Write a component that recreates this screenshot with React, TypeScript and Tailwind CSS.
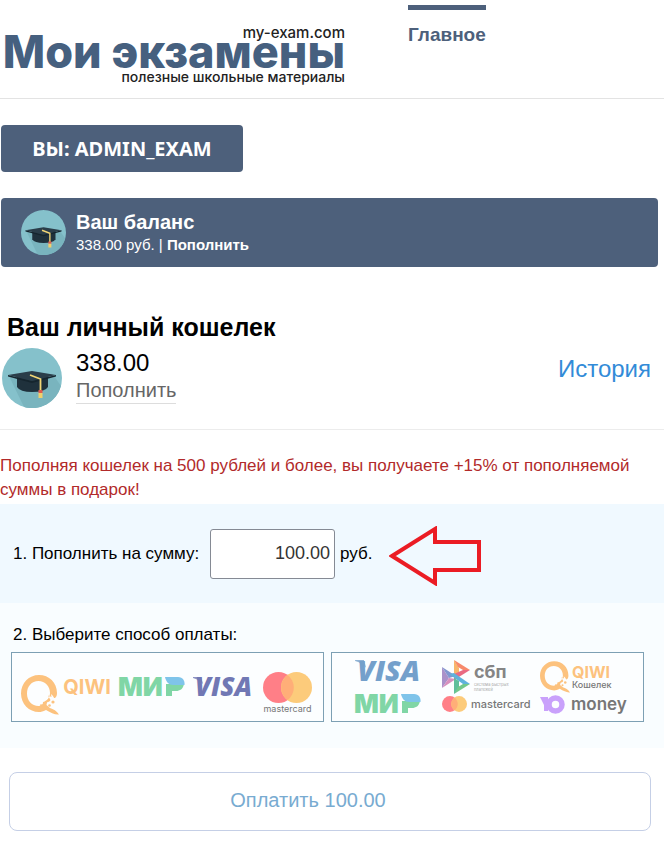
import type React from "react"
import { useState } from "react"

const BALANCE = "338.00"

const CapAvatar: React.FC<{ className: string }> = ({ className }) => (
  <svg viewBox="0 0 60 60" className={className} aria-hidden="true">
    <circle cx="30" cy="30" r="30" fill="#85c1cb" />
    <path d="M7 28 L22 59 A30 30 0 0 0 59 38 L52 28 Z" fill="#79b4be" />
    <path d="M15 28 V39 Q18 44 30 44 Q43 44 46 39 V28 Z" fill="#1f313c" />
    <path d="M6 27 L30 33 L54 27 V28.500 L30 35 L6 28.500 Z" fill="#15252e" />
    <path d="M6 27 L30 23 L54 27 L30 33 Z" fill="#2a3d49" />
    <path d="M28 27 L38.500 31 V43" fill="none" stroke="#f2d675" strokeWidth="1.800" />
    <rect x="36.500" y="42" width="4" height="3" fill="#e0594f" />
    <rect x="36.500" y="45" width="4" height="5" fill="#f2cf6b" />
  </svg>
)

const QiwiMark: React.FC<{ className: string }> = ({ className }) => (
  <svg viewBox="0 0 38 40" className={className} aria-hidden="true">
    <path
      fill="#fcc27e"
      fillRule="evenodd"
      d="M18 0 C28 0 36 7.500 36 18 C36 20 35.500 22 34 23 C33 23.500 32.500 22 32 21 L30 19 L30.500 22 L27 20.500 L29.500 25 C29 27 27 26.500 26 27.500 L25.500 30 L29 33 C32 34 36 36 38 39.500 C34 40 30 38 25 35 C22 36.500 20 37 18 37 C8 37 0 29 0 18.500 C0 8 8 0 18 0 Z M17.500 6 C10.500 6 6 11.500 6 18.500 C6 26 11 31 17.500 31 C19 31 19.500 30.500 19.500 29 C21 30 22 29.500 22 27 C25 26.500 29 23 29 18 C29 11 24 6 17.500 6 Z"
    />
    <circle cx="28.500" cy="30.500" r="1.300" fill="#fcc27e" />
    <circle cx="32" cy="27" r="1.600" fill="#fcc27e" />
  </svg>
)

const MirLogo: React.FC<{ className: string }> = ({ className }) => (
  <svg viewBox="0 0 66 20" className={className} role="img" aria-label="МИР">
    <text x="-1" y="19" fontSize="26" fontWeight="900" className="font-['Inter',sans-serif]" fill="#80d6a6">
      МИ
    </text>
    <path d="M47 7 H65 C64 12 61 14 57 14 H53 V19 H47 Z" fill="#80d6a6" />
    <path d="M46 0 H59 C64 0 66 4 65.500 8 H54 C50 8 47 5 46 0 Z" fill="#7fc4ea" />
  </svg>
)

const VisaLogo: React.FC<{ className: string }> = ({ className }) => (
  <svg viewBox="0 0 58 20" className={className} role="img" aria-label="VISA">
    <text
      x="2"
      y="19"
      fontSize="26"
      fontWeight="800"
      fontStyle="italic"
      fill="currentColor"
      className="font-['Open_Sans',sans-serif]"
    >
      VISA
    </text>
    <path d="M0 0 H8 L10 7 C7 4 4 2 0 1 Z" fill="currentColor" opacity="0.8" />
  </svg>
)

const MastercardMark: React.FC<{ className: string }> = ({ className }) => (
  <svg viewBox="0 0 49 31" className={className} aria-hidden="true">
    <circle cx="15.500" cy="15.500" r="15.500" fill="#ff7f87" />
    <circle cx="33.500" cy="15.500" r="15.500" fill="#fccb7b" />
    <path d="M24.500 3 A15.500 15.500 0 0 1 24.500 28 A15.500 15.500 0 0 1 24.500 3 Z" fill="#ffae78" />
  </svg>
)

const SbpMark: React.FC = () => (
  <svg viewBox="0 0 28 34" className="h-[34px] w-7 shrink-0" aria-hidden="true">
    <path d="M0 7 L7 18 L0 28 Z" fill="#aa91c9" />
    <path d="M0 7 L14 16 L7 18 Z" fill="#8296cf" />
    <path d="M0 28 L7 18 L14 19 Z" fill="#d790bd" />
    <path d="M12 0 L17 8 V14 L12 17 Z" fill="#f8b66c" />
    <path d="M12 0 L28 10 L21 10 L16 7 Z" fill="#f7896b" />
    <path d="M28 10 L12 20 V14 L21 10 Z" fill="#e96a82" />
    <path d="M7 14 L12 13 L28 24 L21 24 Z" fill="#5fb2dc" />
    <path d="M12 18 L17 21 V28 L12 34 Z" fill="#5fbf9b" />
    <path d="M28 24 L12 34 L16 27 L21 24 Z" fill="#73c88b" />
  </svg>
)

const YooMark: React.FC = () => (
  <svg viewBox="0 0 25 19" className="h-[19px] w-[25px] shrink-0" aria-hidden="true">
    <path d="M0 2 H8 V16 H4 V10 Z" fill="#c9a1fb" />
    <circle cx="15.500" cy="9.500" r="6.500" fill="none" stroke="#c9a1fb" strokeWidth="5.500" />
  </svg>
)

export default function App() {
  const [amount, setAmount] = useState("100.00")
  const [method, setMethod] = useState("cards")

  return (
    <div className="min-h-screen bg-white font-['Liberation_Sans',Arial,sans-serif] text-black">
      <header className="flex border-b border-[#e3e3e3]">
        <a
          href="#home"
          className="flex h-[98px] w-[345px] flex-col items-end pt-[27px] font-['Inter',sans-serif] font-medium text-[#222]"
        >
          <span className="text-[15px] leading-3">my-exam.com</span>
          <span className="whitespace-nowrap text-[45px] font-extrabold leading-[26px] text-[#46607f]">Мои экзамены</span>
          <span className="text-[14px] leading-6">полезные школьные материалы</span>
        </a>
        <nav className="ml-[63px] pt-[5px]">
          <a href="#main" className="block border-t-[5px] border-[#4d607b] pt-[13px] text-[19px] font-bold leading-6 text-[#4d607b]">
            Главное
          </a>
        </nav>
      </header>

      <main className="pt-[26px]">
        <button
          type="button"
          className="ml-px h-[47px] w-[242px] rounded bg-[#4d607b] font-['Noto_Sans',sans-serif] text-[20px] font-bold leading-6 text-white"
        >
          ВЫ: ADMIN_EXAM
        </button>

        <section className="ml-px mr-1.5 mt-[26px] flex h-[69px] items-center gap-2.5 rounded bg-[#4d607b] pl-5 text-white">
          <CapAvatar className="h-[45px] w-[45px]" />
          <div>
            <h2 className="text-[20px] font-bold leading-6">Ваш баланс</h2>
            <p className="text-[15px] leading-[22px]">
              {BALANCE} руб. |{" "}
              <a href="#topup" className="font-bold">
                Пополнить
              </a>
            </p>
          </div>
        </section>

        <section className="mt-11 border-b border-[#ececec] pb-[21px]">
          <h1 className="ml-[7px] text-[25px] font-bold leading-8">Ваш личный кошелек</h1>
          <div className="flex items-center pl-0.5 pr-[13px] pt-[5px]">
            <CapAvatar className="h-[60px] w-[60px]" />
            <div className="mb-1 ml-3.5">
              <p className="text-[24px] leading-7">{BALANCE}</p>
              <a href="#topup" className="inline-block border-b border-[#ddd] text-[20px] leading-[26px] text-[#666]">
                Пополнить
              </a>
            </div>
            <a href="#history" className="mb-[18px] ml-auto text-[24px] leading-7 text-[#328bd8]">
              История
            </a>
          </div>
        </section>

        <p className="pt-6 text-[17px] leading-6 text-[#b22a2a]">
          Пополняя кошелек на 500 рублей и более, вы получаете +15% от пополняемой суммы в подарок!
        </p>

        <form onSubmit={(e) => e.preventDefault()}>
          <div className="mt-0.5 flex h-[99px] items-center bg-[#f0f9ff] pl-[13px] text-[17px]">
            <label htmlFor="amount" className="w-[197px]">
              1. Пополнить на сумму:
            </label>
            <input
              id="amount"
              value={amount}
              onChange={(e) => setAmount(e.target.value)}
              className="h-[50px] w-[125px] rounded-[3px] border border-[#858a94] bg-white px-1 text-right text-[18px] text-[#333]"
            />
            <span className="ml-[5px]">руб.</span>
            <svg viewBox="0 0 94 60" className="ml-[17px] mt-1 h-[60px] w-[94px]" aria-hidden="true">
              <path d="M3 30 L46 3 V16 H90 V44 H46 V57 Z" fill="none" stroke="#eb1c24" strokeWidth="4" />
            </svg>
          </div>

          <div role="group" aria-labelledby="method" className="bg-[#f9fdff] pb-[26px] pl-[11px] pr-5 pt-5">
            <p id="method" className="mb-[5px] pl-0.5 text-[17px] leading-6">
              2. Выберите способ оплаты:
            </p>
            <div className="grid grid-cols-2 gap-[7px]">
              <button
                type="button"
                aria-pressed={method === "cards"}
                onClick={() => setMethod("cards")}
                className="flex h-[70px] items-center border border-[#7da0b4] bg-[#fcfeff] pl-[9px]"
              >
                <QiwiMark className="mt-4 h-10 w-[38px] shrink-0" />
                <span className="ml-1 w-12 font-['Inter',sans-serif] text-[20px] font-bold text-[#fcc27e]">QIWI</span>
                <MirLogo className="ml-2 h-5 w-[66px] shrink-0 overflow-visible" />
                <VisaLogo className="ml-2 h-5 w-[58px] shrink-0 overflow-visible text-[#7178b4]" />
                <span className="ml-3 mt-3 flex flex-col items-center font-['Inter',sans-serif] text-[9px] leading-3 text-[#777]">
                  <MastercardMark className="h-[31px] w-[49px]" />
                  mastercard
                </span>
              </button>
              <button
                type="button"
                aria-pressed={method === "all"}
                onClick={() => setMethod("all")}
                className="grid h-[70px] grid-cols-[87px_98px_1fr] grid-rows-[34px_20px] content-center items-center border border-[#7da0b4] bg-[#fcfeff] pl-[23px] text-left font-['Inter',sans-serif] text-[#777]"
              >
                <VisaLogo className="h-[22px] w-16 self-start overflow-visible text-[#74a0cb]" />
                <span className="flex items-center gap-1">
                  <SbpMark />
                  <span className="flex flex-col">
                    <span className="text-[18px] font-bold leading-5 text-[#858585]">сбп</span>
                    <span className="whitespace-nowrap text-[4px] leading-[5px] text-[#aaa]">
                      система быстрых
                      <br />
                      платежей
                    </span>
                  </span>
                </span>
                <span className="flex items-center gap-0.5">
                  <QiwiMark className="h-8 w-[30px] shrink-0" />
                  <span className="flex flex-col">
                    <span className="text-[16px] font-bold leading-4 text-[#fcc27e]">QIWI</span>
                    <span className="text-[9px] font-medium leading-[10px]">Кошелек</span>
                  </span>
                </span>
                <MirLogo className="h-5 w-[66px] overflow-visible" />
                <span className="flex items-center gap-1 text-[11px] font-medium">
                  <MastercardMark className="h-4 w-[25px] shrink-0" />
                  mastercard
                </span>
                <span className="flex items-center gap-1.5 text-[17px] font-semibold leading-5">
                  <YooMark />
                  money
                </span>
              </button>
            </div>
          </div>

          <button
            type="submit"
            className="ml-[9px] mt-6 flex h-[59px] w-[calc(100%-22px)] items-center justify-center rounded-lg border border-[#c5cfe6] bg-white pb-1 pr-11 text-[20px] text-[#78abd1]"
          >
            Оплатить {amount}
          </button>
        </form>
      </main>
    </div>
  )
}
